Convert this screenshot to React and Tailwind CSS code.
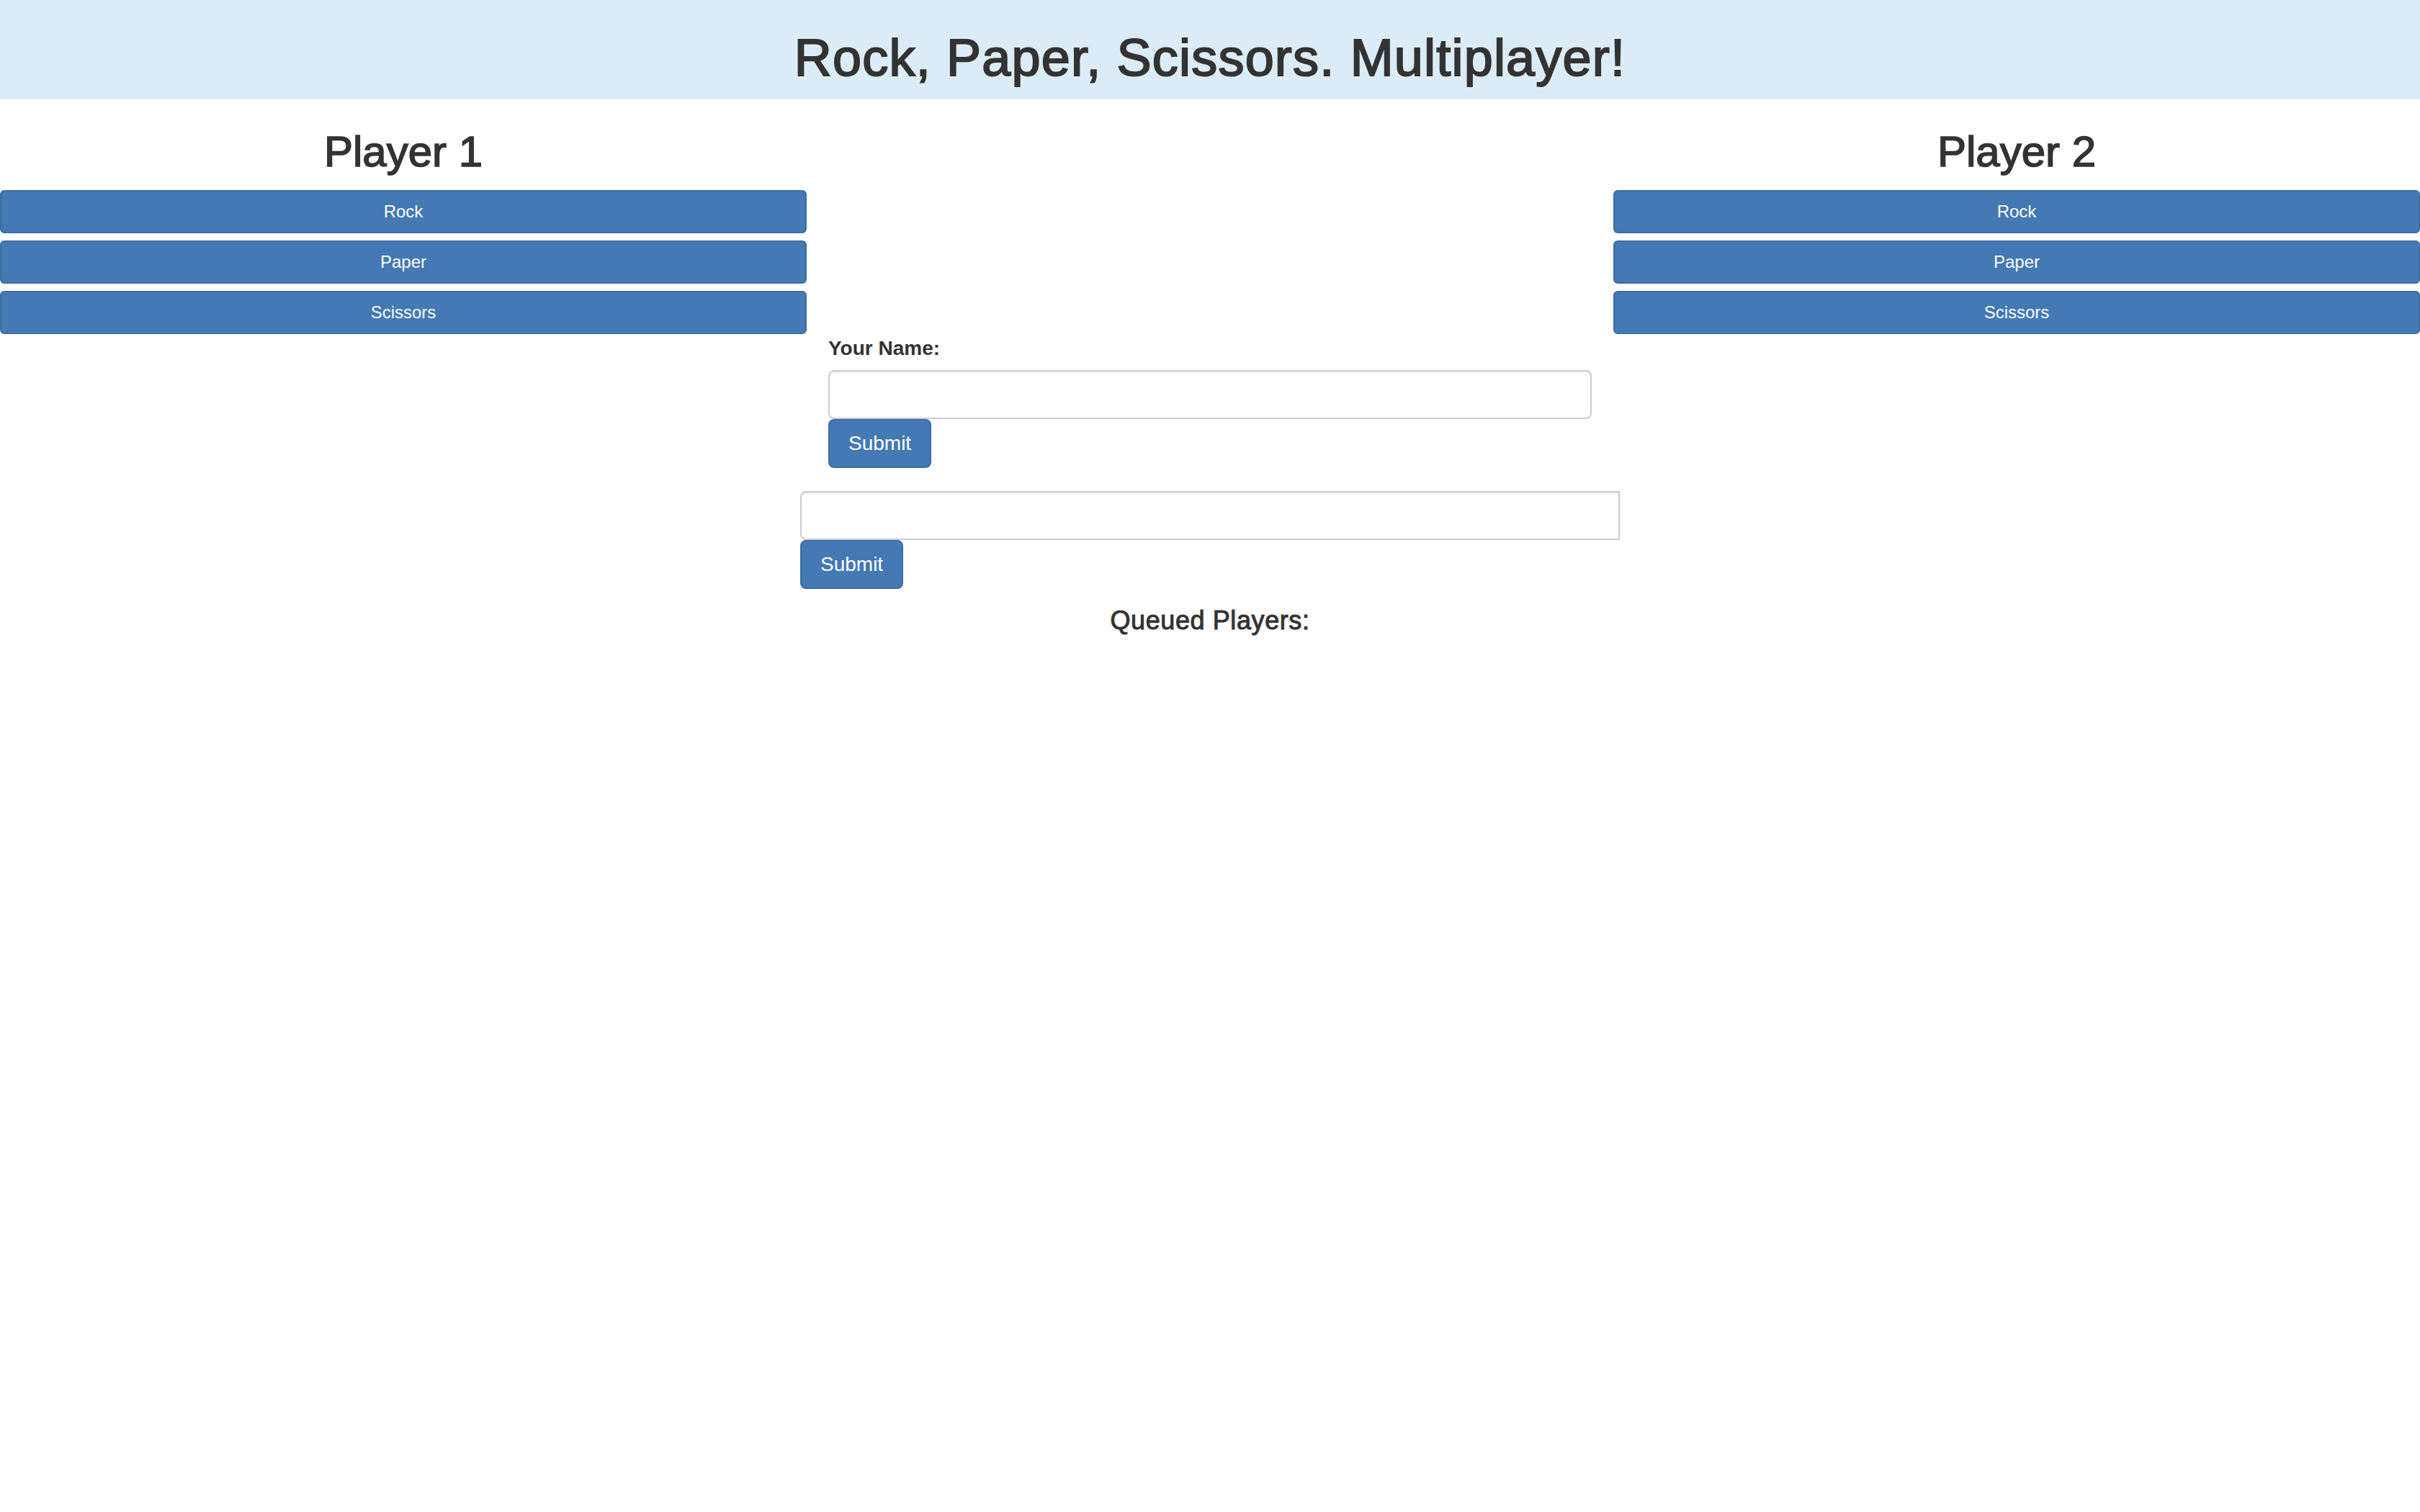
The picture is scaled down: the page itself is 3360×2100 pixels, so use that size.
import { useState } from 'react'

const moves = ['Rock', 'Paper', 'Scissors']

function PlayerColumn({ name }) {
    return (
        <div>
            <h2 className="mt-[40px] mb-[20px] text-center text-[60px] leading-[1.1] font-medium [-webkit-text-stroke:1.6px_#333]">{name}</h2>
            <div className="flex flex-col gap-[10px]">
                {moves.map((m) => (
                    <button
                        key={m}
                        type="button"
                        className="block w-full h-[60px] px-[20px] text-[24px] leading-[1.5] text-white bg-[#4479b3] border-2 border-[#3c6da5] rounded-[6px]"
                    >
                        {m}
                    </button>
                ))}
            </div>
        </div>
    )
}

export default function App() {
    const [name, setName] = useState('')
    const [other, setOther] = useState('')

    return (
        <div className="min-h-screen bg-white text-[#333]" style={{ fontFamily: '"Liberation Sans", Arial, sans-serif' }}>
            <div className="h-[138px] bg-[#dbecf6] pt-[41px]">
                <h1 className="text-center text-[72px] leading-[1.1] font-medium tracking-[1.2px] [-webkit-text-stroke:2px_#333]">
                    Rock, Paper, Scissors. Multiplayer!
                </h1>
            </div>

            <div className="grid grid-cols-3">
                <PlayerColumn name="Player 1" />
                <div></div>
                <PlayerColumn name="Player 2" />
            </div>

            <div className="grid grid-cols-3">
                <div></div>
                <form onSubmit={(e) => e.preventDefault()} className="px-[30px]">
                    <label htmlFor="your_name" className="inline-block mb-[10px] text-[28px] leading-[40px] font-bold">
                        Your Name:
                    </label>
                    <input
                        id="your_name"
                        type="text"
                        value={name}
                        onChange={(e) => setName(e.target.value)}
                        className="block w-full h-[68px] px-[24px] text-[28px] border-2 border-[#ccc] rounded-[8px] shadow-[inset_0_2px_2px_rgba(0,0,0,0.075)] outline-none"
                    />
                    <button
                        type="submit"
                        className="block h-[68px] px-[26px] text-[28px] leading-[40px] text-white bg-[#4479b3] border-2 border-[#3c6da5] rounded-[8px]"
                    >
                        Submit
                    </button>
                </form>
                <div></div>
            </div>

            <form onSubmit={(e) => e.preventDefault()} className="mx-auto mt-[32px] w-[1138px]">
                <input
                    type="text"
                    value={other}
                    onChange={(e) => setOther(e.target.value)}
                    className="block w-full h-[68px] px-[24px] text-[28px] border-2 border-[#ccc] rounded-l-[8px] shadow-[inset_0_2px_2px_rgba(0,0,0,0.075)] outline-none"
                />
                <button
                    type="submit"
                    className="block h-[68px] px-[26px] text-[28px] leading-[40px] text-white bg-[#4479b3] border-2 border-[#3c6da5] rounded-[8px]"
                >
                    Submit
                </button>
            </form>

            <h4 className="mt-[24px] text-center text-[36px] leading-[1.1] font-medium tracking-[0.6px] [-webkit-text-stroke:1px_#333]">
                Queued Players:
            </h4>
        </div>
    )
}
